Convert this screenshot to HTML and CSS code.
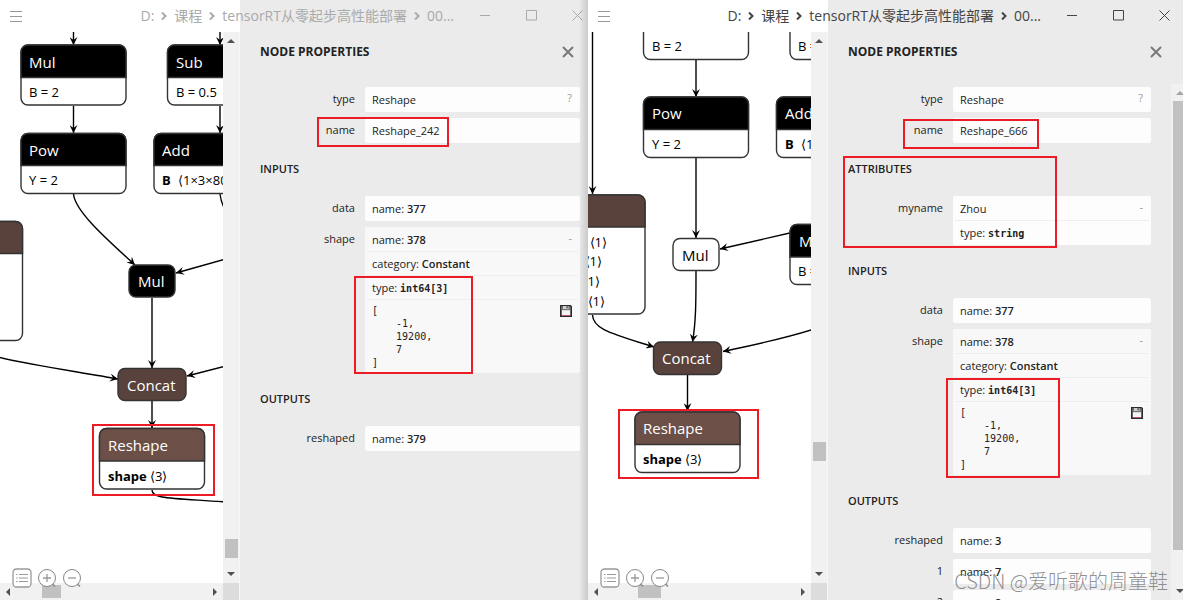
FILE: index.html
```html
<!DOCTYPE html>
<html lang="zh-CN">
<head>
<meta charset="utf-8">
<title>Node Properties</title>
<link rel="stylesheet" href="styles.css">
</head>
<body>
<svg class="defs" width="0" height="0" aria-hidden="true">
  <defs>
    <marker id="arrow" viewBox="0 0 8 8" refX="8" refY="4" markerWidth="8" markerHeight="8" markerUnits="userSpaceOnUse" orient="auto"><path d="M0 0L8 4L0 8L3 4z"/></marker>
    <symbol id="menu" viewBox="0 0 12 12"><path d="M0 1.5h12M0 6.5h12M0 11.5h12" stroke="#999" fill="none"/></symbol>
    <symbol id="chevron" viewBox="0 0 6 8"><path d="M1 0.500L4.500 4L1 7.500" stroke="currentColor" stroke-width="2" fill="none"/></symbol>
    <symbol id="min" viewBox="0 0 11 11"><path d="M0 5.500h10" stroke="currentColor"/></symbol>
    <symbol id="max" viewBox="0 0 11 11"><path d="M.5.5h10v9.500h-10z" stroke="currentColor" fill="none"/></symbol>
    <symbol id="x" viewBox="0 0 11 11"><path d="M.5.5l10 10M10.500.5l-10 10" stroke="currentColor" fill="none"/></symbol>
    <symbol id="close" viewBox="0 0 12 12"><path d="M1 1l10 10M11 1L1 11" stroke="#777" stroke-width="1.900" fill="none"/></symbol>
    <symbol id="list" viewBox="0 0 20 20"><rect x="1" y="1" width="18" height="18" rx="3.500" fill="#fff" stroke="#999" stroke-width="1.300"/><path d="M4 6.500h1.500M4 10h1.500M4 13.500h1.500M7 6.500h9M7 10h9M7 13.500h9" stroke="#999" stroke-width="1.200"/></symbol>
    <symbol id="plus" viewBox="0 0 20 20"><circle cx="10" cy="10" r="8.500" fill="#fff" stroke="#888"/><path d="M6 10h8M10 6v8" stroke="#999" stroke-width="1.300"/><path d="M15.500 16l2.500 2.500" stroke="#888" stroke-width="1.500"/></symbol>
    <symbol id="minus" viewBox="0 0 20 20"><circle cx="10" cy="10" r="8.500" fill="#fff" stroke="#888"/><path d="M6 10h8" stroke="#999" stroke-width="1.300"/><path d="M15.500 16l2.500 2.500" stroke="#888" stroke-width="1.500"/></symbol>
    <symbol id="save" viewBox="0 0 12 12"><path d="M.6.6h9.800l1 1v9.800H.6z" fill="#777" stroke="#2a2a2e" stroke-width="1.200"/><path d="M3 1h5.500v3H3z" fill="#ccc"/><path d="M6.500 1.200h1.200v2H6.500z" fill="#333"/><path d="M2 5.200h8v5H2z" fill="#f4f4f4"/><path d="M2 10h8v1H2z" fill="#c2507c"/></symbol>
    <symbol id="up" viewBox="0 0 8 4"><path d="M0 4l4-4 4 4z" fill="currentColor"/></symbol>
    <symbol id="down" viewBox="0 0 8 4"><path d="M0 0l4 4 4-4z" fill="currentColor"/></symbol>
    <symbol id="prev" viewBox="0 0 4 8"><path d="M4 0L0 4l4 4z" fill="currentColor"/></symbol>
    <symbol id="next" viewBox="0 0 4 8"><path d="M0 0l4 4-4 4z" fill="currentColor"/></symbol>
  </defs>
</svg>
<main class="desktop">
  <section class="window inactive">
    <header class="titlebar">
      <button class="menu" aria-label="Menu"><svg><use href="#menu"/></svg></button>
      <h1 class="path"><span>D:</span><svg><use href="#chevron"/></svg><span>课程</span><svg><use href="#chevron"/></svg><span>tensorRT从零起步高性能部署</span><svg><use href="#chevron"/></svg><span>00...</span></h1>
      <div class="controls">
        <button aria-label="Minimize"><svg><use href="#min"/></svg></button>
        <button aria-label="Maximize"><svg><use href="#max"/></svg></button>
        <button aria-label="Close"><svg><use href="#x"/></svg></button>
      </div>
    </header>
    <div class="viewer">
      <svg class="graph">
        <g transform="translate(0 -32)">
          <g class="edges">
            <path d="M73.500 30V45"/><path d="M220 30V45"/><path d="M73.500 106V133"/><path d="M220 106V133"/>
            <path d="M73.500 194C75 212 110 242 135 265"/><path class="open" d="M220 194Q221 202 225 210"/>
            <path d="M226 259L176 273"/><path d="M152 298V368"/><path d="M-2 357C30 365 80 372 118 379"/>
            <path d="M226 366L187 376"/><path d="M152 401V428"/><path class="open" d="M152 490C152 499 170 498 226 502"/>
          </g>
          <g class="node"><rect class="box" x="21" y="45" width="105" height="60" rx="7"/><path class="op" d="M21 77.500V52a7 7 0 0 1 7-7h91a7 7 0 0 1 7 7v25.500z"/><text class="name" x="29" y="68">Mul</text><text x="29" y="97">B = 2</text></g>
          <g class="node"><rect class="box" x="167.500" y="45" width="105" height="60" rx="7"/><path class="op" d="M167.500 77.500V52a7 7 0 0 1 7-7h91v32.500z"/><text class="name" x="176" y="68">Sub</text><text x="176" y="97">B = 0.5</text></g>
          <g class="node"><rect class="box" x="21" y="133.500" width="105" height="60" rx="7"/><path class="op" d="M21 165.500v-25a7 7 0 0 1 7-7h91a7 7 0 0 1 7 7v25z"/><text class="name" x="29" y="156">Pow</text><text x="29" y="185">Y = 2</text></g>
          <g class="node"><rect class="box" x="154" y="133.500" width="130" height="60" rx="7"/><path class="op" d="M154 165.500v-25a7 7 0 0 1 7-7h91v32z"/><text class="name" x="162" y="156">Add</text><text x="162" y="185"><tspan class="bold">B</tspan><tspan x="178">⟨1×3×80</tspan></text></g>
          <g class="node"><rect class="box" x="-80" y="221.500" width="102.500" height="119" rx="7"/><path class="op brown" d="M-80 253.500v-32h95.500a7 7 0 0 1 7 7v25z"/></g>
          <g class="node"><rect class="op" x="129" y="265" width="46" height="32" rx="7"/><text class="name" x="138" y="287">Mul</text></g>
          <g class="node"><rect class="op brown" x="118" y="368.500" width="68" height="32" rx="7"/><text class="name" x="127" y="391">Concat</text></g>
          <g class="node"><rect class="box" x="99.500" y="428.500" width="105" height="60.500" rx="7"/><path class="op picked" d="M99.500 461v-25.500a7 7 0 0 1 7-7h91a7 7 0 0 1 7 7V461z"/><text class="name" x="108" y="451">Reshape</text><text x="108" y="481"><tspan class="bold">shape</tspan><tspan x="150">⟨3⟩</tspan></text></g>
        </g>
      </svg>
      <div class="scroll vertical"><svg><use href="#up"/></svg><span style="flex-grow:490"></span><b></b><span style="flex-grow:8"></span><svg><use href="#down"/></svg></div>
      <div class="scroll horizontal"><svg><use href="#prev"/></svg><span style="flex-grow:25"></span><b></b><span style="flex-grow:145"></span><svg><use href="#next"/></svg></div>
      <div class="corner"></div>
      <div class="tools"><button aria-label="Model properties"><svg><use href="#list"/></svg></button><button aria-label="Zoom in"><svg><use href="#plus"/></svg></button><button aria-label="Zoom out"><svg><use href="#minus"/></svg></button></div>
    </div>
    <aside class="sidebar">
      <header class="heading"><h2>NODE PROPERTIES</h2><button aria-label="Close sidebar"><svg><use href="#close"/></svg></button></header>
      <div class="body">
        <div class="content">
          <dl>
            <dt>type</dt><dd><div>Reshape<button>?</button></div></dd>
            <dt>name</dt><dd><div>Reshape_242</div></dd>
          </dl>
          <h3>INPUTS</h3>
          <dl>
            <dt>data</dt><dd><div>name: <b>377</b></div></dd>
            <dt>shape</dt><dd class="constant"><div>name: <b>378</b><button>-</button></div><div>category: <b>Constant</b></div><div>type: <code>int64[3]</code></div><div class="tensor"><pre>[
    -1,
    19200,
    7
]</pre><button aria-label="Save tensor"><svg><use href="#save"/></svg></button></div></dd>
          </dl>
          <h3>OUTPUTS</h3>
          <dl><dt>reshaped</dt><dd><div>name: <b>379</b></div></dd></dl>
        </div>
      </div>
    </aside>
    <div class="mark left-name"></div><div class="mark left-tensor"></div><div class="mark left-node"></div>
  </section>

  <section class="window active">
    <header class="titlebar">
      <button class="menu" aria-label="Menu"><svg><use href="#menu"/></svg></button>
      <h1 class="path"><span>D:</span><svg><use href="#chevron"/></svg><span>课程</span><svg><use href="#chevron"/></svg><span>tensorRT从零起步高性能部署</span><svg><use href="#chevron"/></svg><span>00...</span></h1>
      <div class="controls">
        <button aria-label="Minimize"><svg><use href="#min"/></svg></button>
        <button aria-label="Maximize"><svg><use href="#max"/></svg></button>
        <button aria-label="Close"><svg><use href="#x"/></svg></button>
      </div>
    </header>
    <div class="viewer">
      <svg class="graph">
        <g transform="translate(0 -32)">
          <g class="edges">
            <path d="M4.500 30V194"/><path d="M108 60V97"/><path d="M108 158V238"/>
            <path d="M204 232.500L132 249"/><path d="M108 271C108 300 108 322 104.500 342"/>
            <path d="M4.500 315C5 329 22 333 66 347"/><path d="M226 329C195 339 170 344 135 351.500"/><path d="M99.500 375V411"/>
          </g>
          <g class="node"><rect class="box" x="55.500" y="0" width="105" height="59.500" rx="7"/><text x="64" y="51">B = 2</text></g>
          <g class="node"><rect class="box" x="202" y="0" width="105" height="59.500" rx="7"/><text x="210" y="51">B = 0.5</text></g>
          <g class="node"><rect class="box" x="55.500" y="97" width="105" height="60.500" rx="7"/><path class="op" d="M55.500 129.500V104a7 7 0 0 1 7-7h91a7 7 0 0 1 7 7v25.500z"/><text class="name" x="64" y="119">Pow</text><text x="64" y="149">Y = 2</text></g>
          <g class="node"><rect class="box" x="188.500" y="97" width="130" height="60.500" rx="7"/><path class="op" d="M188.500 129.500V104a7 7 0 0 1 7-7h91v32.500z"/><text class="name" x="197" y="119">Add</text><text x="197" y="149"><tspan class="bold">B</tspan><tspan x="213">⟨1×3×80</tspan></text></g>
          <g class="node"><rect class="box" x="-80" y="195" width="137" height="119" rx="7"/><path class="op brown" d="M-80 227v-32H50a7 7 0 0 1 7 7v25z"/><g text-anchor="end"><text x="19" y="247">⟨1⟩</text><text x="14" y="266">⟨1⟩</text><text x="12" y="286">⟨1⟩</text><text x="17" y="306">⟨1⟩</text></g></g>
          <g class="node"><rect class="box" x="85" y="238.500" width="46" height="32" rx="7"/><text class="name dark" x="94" y="261">Mul</text></g>
          <g class="node"><rect class="box" x="202" y="224.500" width="105" height="60" rx="7"/><path class="op" d="M202 257v-25.500a7 7 0 0 1 7-7h91V257z"/><text class="name" x="211" y="247">Mul</text><text x="210" y="276">B = 2</text></g>
          <g class="node"><rect class="op brown" x="65.500" y="342" width="68" height="32.500" rx="7"/><text class="name" x="74" y="364">Concat</text></g>
          <g class="node"><rect class="box" x="47" y="412" width="105" height="60.500" rx="7"/><path class="op picked" d="M47 444.500V419a7 7 0 0 1 7-7h91a7 7 0 0 1 7 7v25.500z"/><text class="name" x="55" y="434">Reshape</text><text x="55" y="464"><tspan class="bold">shape</tspan><tspan x="97">⟨3⟩</tspan></text></g>
        </g>
      </svg>
      <div class="scroll vertical"><svg><use href="#up"/></svg><span style="flex-grow:393"></span><b></b><span style="flex-grow:105"></span><svg><use href="#down"/></svg></div>
      <div class="scroll horizontal wide"><svg><use href="#prev"/></svg><span style="flex-grow:33"></span><b></b><span style="flex-grow:133"></span><svg><use href="#next"/></svg></div>
      <div class="corner"></div>
      <div class="tools"><button aria-label="Model properties"><svg><use href="#list"/></svg></button><button aria-label="Zoom in"><svg><use href="#plus"/></svg></button><button aria-label="Zoom out"><svg><use href="#minus"/></svg></button></div>
    </div>
    <aside class="sidebar">
      <header class="heading"><h2>NODE PROPERTIES</h2><button aria-label="Close sidebar"><svg><use href="#close"/></svg></button></header>
      <div class="body">
        <div class="content">
          <dl>
            <dt>type</dt><dd><div>Reshape<button>?</button></div></dd>
            <dt>name</dt><dd><div>Reshape_666</div></dd>
          </dl>
          <h3>ATTRIBUTES</h3>
          <dl><dt>myname</dt><dd><div>Zhou<button>-</button></div><div>type: <code>string</code></div></dd></dl>
          <h3>INPUTS</h3>
          <dl>
            <dt>data</dt><dd><div>name: <b>377</b></div></dd>
            <dt>shape</dt><dd class="constant"><div>name: <b>378</b><button>-</button></div><div>category: <b>Constant</b></div><div>type: <code>int64[3]</code></div><div class="tensor"><pre>[
    -1,
    19200,
    7
]</pre><button aria-label="Save tensor"><svg><use href="#save"/></svg></button></div></dd>
          </dl>
          <h3>OUTPUTS</h3>
          <dl>
            <dt>reshaped</dt><dd><div>name: <b>3</b></div></dd>
            <dt>1</dt><dd><div>name: <b>7</b></div></dd>
            <dt>2</dt><dd><div>name: <b>8</b></div></dd>
          </dl>
        </div>
        <div class="side-scroll"><svg class="dim"><use href="#up"/></svg><b></b><svg><use href="#down"/></svg></div>
      </div>
    </aside>
    <div class="mark right-name"></div><div class="mark right-attributes"></div><div class="mark right-tensor"></div><div class="mark right-node"></div>
    <div class="watermark">CSDN @爱听歌的周童鞋</div>
  </section>
</main>
</body>
</html>
```
FILE: styles.css
```css
* { box-sizing: border-box; }
body {
  margin: 0;
  font: 11px/16px "Open Sans", "Noto Sans CJK SC", sans-serif;
  color: #222;
}
h1, h2, h3, dl, dd, pre { margin: 0; }
button { border: 0; padding: 0; background: none; color: inherit; font: inherit; display: flex; align-items: center; justify-content: center; }
svg { display: block; }
.defs { position: absolute; }

.desktop { display: grid; grid-template-columns: 588fr 595fr; height: 100vh; overflow: hidden; }
.window {
  position: relative;
  display: grid;
  grid-template: 32px minmax(0, 1fr) / 240px minmax(0, 1fr);
  min-width: 0;
  height: 100vh;
  overflow: hidden;
  background: #ebebeb;
}
.inactive::after {
  content: "";
  position: absolute;
  inset: 0 0 0 auto;
  width: 9px;
  background: linear-gradient(90deg, transparent, rgba(0, 0, 0, .14));
}

.titlebar { grid-column: 1 / -1; display: flex; background: linear-gradient(90deg, #fff 240px, #ebebeb 240px); color: #444; }
.inactive .titlebar { color: #aaa; }
.menu { width: 32px; height: 32px; }
.menu svg { width: 12px; height: 12px; }
.path { flex: 1; display: flex; justify-content: flex-end; align-items: center; gap: 7px; font-size: 14px; font-weight: 400; white-space: nowrap; padding-right: 8px; }
.path svg { width: 6px; height: 8px; }
.controls { display: flex; margin-right: -12px; }
.active .controls { margin-right: -4px; }
.controls button { width: 46px; height: 31px; }
.controls svg { width: 11px; height: 11px; }

.viewer {
  position: relative;
  display: grid;
  grid-template: minmax(0, 1fr) 17px / minmax(0, 1fr) 16px;
  background: #fff;
  border-right: 1px solid #f7f7f7;
}
.graph { width: 100%; height: 100%; overflow: hidden; font-size: 13px; }
.edges path { fill: none; stroke: #000; stroke-width: 1.4; marker-end: url(#arrow); }
.edges .open { marker-end: none; }
.box { fill: #fff; stroke: #333; stroke-width: 1.4; }
.op { fill: #000; stroke: #333; stroke-width: 1.4; }
.brown { fill: #59423b; }
.picked { fill: #6c4f47; }
.node text { fill: #000; }
.node .name { fill: #fff; font-size: 15px; }
.node .dark { fill: #000; }
.bold { font-weight: 700; }

.scroll { display: flex; background: #f1f1f1; color: #505050; align-items: center; }
.scroll b { background: #c1c1c1; }
.scroll span { flex-basis: 0; }
.vertical { flex-direction: column; padding: 7px 0; }
.vertical svg { width: 8px; height: 4px; }
.vertical svg:first-child { margin-bottom: 6px; }
.vertical svg:last-child { margin-top: 6px; }
.vertical b { width: 13px; height: 19px; }
.horizontal { padding: 0 6px; }
.horizontal svg { width: 4px; height: 8px; }
.horizontal svg:first-child { margin-right: 7px; }
.horizontal svg:last-child { margin-left: 6px; }
.horizontal b { width: 19px; height: 13px; }
.wide b { width: 23px; }
.corner { background: #dcdcdc; }
.tools { position: absolute; left: 12px; bottom: 12px; display: flex; gap: 5px; }
.tools svg { width: 20px; height: 20px; }

.sidebar { display: flex; flex-direction: column; min-height: 0; }
.heading { display: flex; justify-content: space-between; align-items: center; height: 40px; padding: 0 14px 0 20px; margin-bottom: 12px; }
.active .heading { padding-right: 21px; }
.heading h2 { font-size: 12px; font-weight: 700; }
.heading svg { width: 12px; height: 12px; }
.body { flex: 1; display: flex; min-height: 0; }
.content { flex: 1; padding: 3px 8px 0 20px; overflow: hidden; }
.active .content { padding-right: 20px; }
h3 { font-size: 11px; font-weight: 600; height: 53px; padding-top: 18px; }
dl { display: grid; grid-template-columns: 95px minmax(0, 1fr); column-gap: 10px; row-gap: 6px; }
dt { text-align: right; padding-top: 4px; }
dd { background: #fdfdfd; border-radius: 2px; padding: 0 2px 1px; }
.constant { background: #f8f8f8; }
dd > div { position: relative; height: 24px; padding: 5px 5px 0; }
dd > div + div { border-top: 1px solid #eee; padding-top: 4px; }
dd b { font-weight: 600; }
dd button { position: absolute; right: 6px; top: 3px; color: #999; }
code { font: 700 10px/16px "DejaVu Sans Mono", monospace; }
dd > .tensor { height: auto; padding: 4px 5px 3px; }
pre { font: 10px/13px "DejaVu Sans Mono", monospace; }
.tensor button { top: 5px; }
.tensor svg { width: 12px; height: 12px; }

.side-scroll { display: flex; flex-direction: column; justify-content: space-between; width: 12px; padding: 7px 0 7px 5px; background: #f1f1f1; overflow: hidden; color: #505050; }
.side-scroll svg { width: 8px; height: 4px; flex: none; }
.side-scroll .dim { color: #a3a3a3; }
.side-scroll b { flex: 1; margin: 6px 0 39px -3px; background: #c1c1c1; }

.mark { position: absolute; border: 2px solid #ed1c24; }
.left-name { left: 317px; top: 117px; width: 132px; height: 30px; }
.left-tensor { left: 354px; top: 276px; width: 119px; height: 98px; }
.left-node { left: 92px; top: 424px; width: 123px; height: 72px; }
.right-name { left: 315px; top: 119px; width: 136px; height: 30px; }
.right-attributes { left: 255px; top: 156px; width: 214px; height: 92px; }
.right-tensor { left: 358px; top: 378px; width: 114px; height: 100px; }
.right-node { left: 30px; top: 409px; width: 141px; height: 70px; }
.watermark { position: absolute; right: 15px; bottom: 6px; font: 300 20px/26px "Noto Sans CJK SC", sans-serif; color: rgba(110, 110, 110, .75); white-space: nowrap; }
```
